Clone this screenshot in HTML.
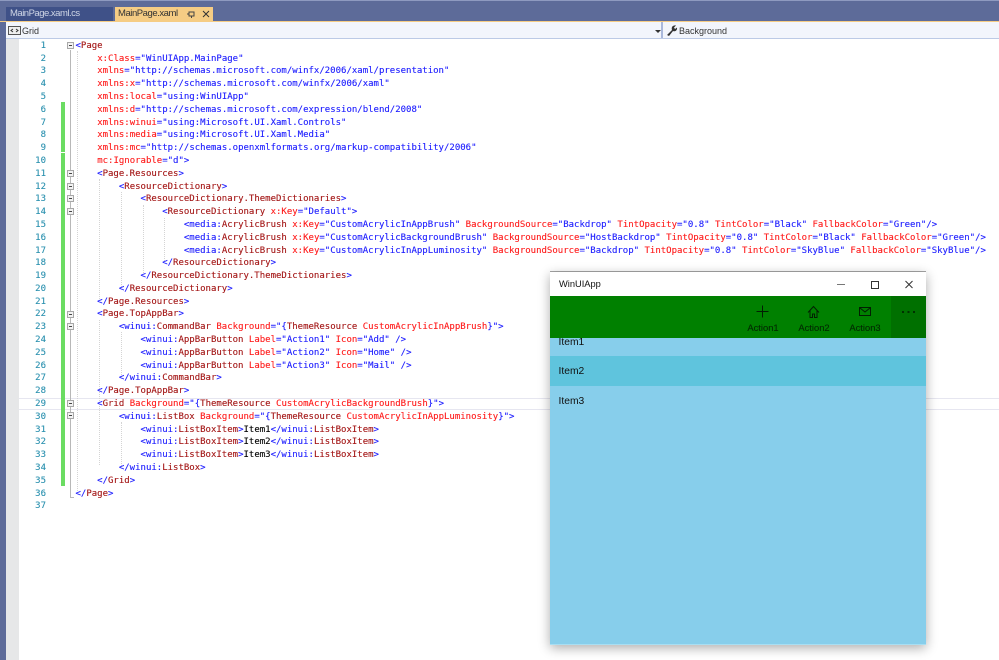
<!DOCTYPE html>
<html><head><meta charset="utf-8"><style>
html,body{margin:0;padding:0;width:999px;height:660px;overflow:hidden;background:#fff}
body{position:relative;font-family:"Liberation Sans",sans-serif}
.a{position:absolute}
.code,.n{position:absolute;left:0;top:1px;width:999px}
.code div{position:absolute;left:75.5px;white-space:pre;font:9px/13px "DejaVu Sans Mono","Liberation Mono",monospace;color:#1c1cff;-webkit-text-stroke:.12px currentColor}
.code i{font-style:normal;color:#a31515}
.code b{font-weight:normal;color:#ff1a1a}
.code u{text-decoration:none;color:#000}
.n div{position:absolute;left:20px;width:26px;text-align:right;font:9px/13px "DejaVu Sans Mono",monospace;color:#2b91af;-webkit-text-stroke:.12px currentColor}
.f{position:absolute;left:67px;width:7px;height:7px;background:#f3f3f3;border:1px solid #a8a8a8;box-sizing:border-box}
.f:after{content:"";position:absolute;left:1px;top:2px;width:3px;height:1px;background:#444}
.g{position:absolute;width:0;border-left:1px dotted #d4d4d4}
.w{font-size:9.400px;color:#012a01;position:absolute;top:322px;width:60px;text-align:center;line-height:12px;-webkit-text-stroke:.1px currentColor}
.it{position:absolute;left:8.500px;font-size:10.300px;line-height:13px;color:#111}
</style></head><body>
<div class="a" style="left:0;top:0;width:999px;height:22px;background:#5d6b99"></div>
<div class="a" style="left:0;top:0;width:999px;height:1px;background:#8e9ac0"></div>
<div class="a" style="left:6px;top:7px;width:107px;height:14px;background:#3f5188;color:#cfd6e6;font-size:9.500px;letter-spacing:-.5px;line-height:14px;text-indent:4px">MainPage.xaml.cs</div>
<div class="a" style="left:115px;top:7px;width:98px;height:15px;background:#f5cc84;color:#333;font-size:9.500px;letter-spacing:-.45px;line-height:14px;text-indent:3px">MainPage.xaml</div>
<svg class="a" style="left:185px;top:9px" width="28" height="11"><path d="M4 3h5v4H4zM2 5h2M6.500 7v2" stroke="#444" fill="none"/><path d="M18 2l6 6M24 2l-6 6" stroke="#333" fill="none"/></svg>
<div class="a" style="left:0;top:21px;width:999px;height:1px;background:#f5cc84"></div>
<div class="a" style="left:6px;top:22px;width:993px;height:16px;background:#f2f5fc;border-bottom:1px solid #bccae6"></div>
<svg class="a" style="left:8px;top:26px" width="14" height="10"><rect x=".5" y=".5" width="12" height="8" fill="#eee" stroke="#555"/><path d="M5 3L3 4.500L5 6M8 3l2 1.500L8 6" stroke="#333" fill="none"/></svg>
<div class="a" style="left:22px;top:24px;font-size:9px;line-height:14px;color:#333">Grid</div>
<div class="a" style="left:655px;top:30px;width:0;height:0;border:3px solid transparent;border-top:3px solid #333"></div>
<div class="a" style="left:661px;top:22px;width:2px;height:16px;background:#a9b8dc"></div>
<svg class="a" style="left:666px;top:24px" width="13" height="13"><path d="M1 11l5-5c-1-3 1-5 4-4.500L8 3.500l1 1.500 2-1.500c.5 3-2 4.500-4 3.500l-4 5z" fill="#333"/></svg>
<div class="a" style="left:679px;top:24px;font-size:9px;line-height:14px;color:#333">Background</div>

<div class="a" style="left:0;top:22px;width:6px;height:638px;background:#5d6b99"></div>
<div class="a" style="left:6px;top:39px;width:13px;height:621px;background:#e6e7e8"></div>
<div class="a" style="left:19px;top:398px;width:980px;height:1px;background:#e6e6f0"></div>
<div class="a" style="left:19px;top:409px;width:980px;height:1px;background:#e6e6f0"></div>
<div class="a" style="left:61px;top:102px;width:4px;height:50px;background:#6bdc62"></div>
<div class="a" style="left:61px;top:153px;width:4px;height:333px;background:#6bdc62"></div>
<div class="a" style="left:70px;top:50px;width:1px;height:448px;background:#b8b8b8"></div>
<div class="a" style="left:70px;top:497px;width:4px;height:1px;background:#b8b8b8"></div>
<div class="g" style="left:77px;top:51px;height:440px"></div>
<div class="g" style="left:99px;top:179px;height:120px"></div>
<div class="g" style="left:99px;top:320px;height:145px"></div>
<div class="g" style="left:121px;top:192px;height:95px"></div>
<div class="g" style="left:121px;top:332px;height:45px"></div>
<div class="g" style="left:121px;top:422px;height:44px"></div>
<div class="g" style="left:143px;top:205px;height:68px"></div>
<div class="g" style="left:164px;top:218px;height:43px"></div>
<div class="f" style="top:42px"></div><div class="f" style="top:170px"></div><div class="f" style="top:183px"></div><div class="f" style="top:195px"></div><div class="f" style="top:208px"></div><div class="f" style="top:311px"></div><div class="f" style="top:323px"></div><div class="f" style="top:400px"></div><div class="f" style="top:412px"></div>

<div class="n">
<div style="top:39px">1</div><div style="top:52px">2</div><div style="top:64px">3</div><div style="top:77px">4</div><div style="top:90px">5</div><div style="top:103px">6</div><div style="top:116px">7</div><div style="top:128px">8</div><div style="top:141px">9</div><div style="top:154px">10</div><div style="top:167px">11</div><div style="top:180px">12</div><div style="top:192px">13</div><div style="top:205px">14</div><div style="top:218px">15</div><div style="top:231px">16</div><div style="top:244px">17</div><div style="top:256px">18</div><div style="top:269px">19</div><div style="top:282px">20</div><div style="top:295px">21</div><div style="top:307px">22</div><div style="top:320px">23</div><div style="top:333px">24</div><div style="top:346px">25</div><div style="top:359px">26</div><div style="top:371px">27</div><div style="top:384px">28</div><div style="top:397px">29</div><div style="top:410px">30</div><div style="top:423px">31</div><div style="top:435px">32</div><div style="top:448px">33</div><div style="top:461px">34</div><div style="top:474px">35</div><div style="top:487px">36</div><div style="top:499px">37</div>
</div>

<div class="code">
<div style="top:39px">&lt;<i>Page</i></div>
<div style="top:52px">    <b>x:Class</b>="WinUIApp.MainPage"</div>
<div style="top:64px">    <b>xmlns</b>="http://schemas.microsoft.com/winfx/2006/xaml/presentation"</div>
<div style="top:77px">    <b>xmlns:x</b>="http://schemas.microsoft.com/winfx/2006/xaml"</div>
<div style="top:90px">    <b>xmlns:local</b>="using:WinUIApp"</div>
<div style="top:103px">    <b>xmlns:d</b>="http://schemas.microsoft.com/expression/blend/2008"</div>
<div style="top:116px">    <b>xmlns:winui</b>="using:Microsoft.UI.Xaml.Controls"</div>
<div style="top:128px">    <b>xmlns:media</b>="using:Microsoft.UI.Xaml.Media"</div>
<div style="top:141px">    <b>xmlns:mc</b>="http://schemas.openxmlformats.org/markup-compatibility/2006"</div>
<div style="top:154px">    <b>mc:Ignorable</b>="d"&gt;</div>
<div style="top:167px">    &lt;<i>Page.Resources</i>&gt;</div>
<div style="top:180px">        &lt;<i>ResourceDictionary</i>&gt;</div>
<div style="top:192px">            &lt;<i>ResourceDictionary.ThemeDictionaries</i>&gt;</div>
<div style="top:205px">                &lt;<i>ResourceDictionary</i> <b>x:Key</b>="Default"&gt;</div>
<div style="top:218px">                    &lt;media:<i>AcrylicBrush</i> <b>x:Key</b>="CustomAcrylicInAppBrush" <b>BackgroundSource</b>="Backdrop" <b>TintOpacity</b>="0.8" <b>TintColor</b>="Black" <b>FallbackColor</b>="Green"/&gt;</div>
<div style="top:231px">                    &lt;media:<i>AcrylicBrush</i> <b>x:Key</b>="CustomAcrylicBackgroundBrush" <b>BackgroundSource</b>="HostBackdrop" <b>TintOpacity</b>="0.8" <b>TintColor</b>="Black" <b>FallbackColor</b>="Green"/&gt;</div>
<div style="top:244px">                    &lt;media:<i>AcrylicBrush</i> <b>x:Key</b>="CustomAcrylicInAppLuminosity" <b>BackgroundSource</b>="Backdrop" <b>TintOpacity</b>="0.8" <b>TintColor</b>="SkyBlue" <b>FallbackColor</b>="SkyBlue"/&gt;</div>
<div style="top:256px">                &lt;/<i>ResourceDictionary</i>&gt;</div>
<div style="top:269px">            &lt;/<i>ResourceDictionary.ThemeDictionaries</i>&gt;</div>
<div style="top:282px">        &lt;/<i>ResourceDictionary</i>&gt;</div>
<div style="top:295px">    &lt;/<i>Page.Resources</i>&gt;</div>
<div style="top:307px">    &lt;<i>Page.TopAppBar</i>&gt;</div>
<div style="top:320px">        &lt;winui:<i>CommandBar</i> <b>Background</b>="{<i>ThemeResource</i> <b>CustomAcrylicInAppBrush</b>}"&gt;</div>
<div style="top:333px">            &lt;winui:<i>AppBarButton</i> <b>Label</b>="Action1" <b>Icon</b>="Add" /&gt;</div>
<div style="top:346px">            &lt;winui:<i>AppBarButton</i> <b>Label</b>="Action2" <b>Icon</b>="Home" /&gt;</div>
<div style="top:359px">            &lt;winui:<i>AppBarButton</i> <b>Label</b>="Action3" <b>Icon</b>="Mail" /&gt;</div>
<div style="top:371px">        &lt;/winui:<i>CommandBar</i>&gt;</div>
<div style="top:384px">    &lt;/<i>Page.TopAppBar</i>&gt;</div>
<div style="top:397px">    &lt;<i>Grid</i> <b>Background</b>="{<i>ThemeResource</i> <b>CustomAcrylicBackgroundBrush</b>}"&gt;</div>
<div style="top:410px">        &lt;winui:<i>ListBox</i> <b>Background</b>="{<i>ThemeResource</i> <b>CustomAcrylicInAppLuminosity</b>}"&gt;</div>
<div style="top:423px">            &lt;winui:<i>ListBoxItem</i>&gt;<u>Item1</u>&lt;/winui:<i>ListBoxItem</i>&gt;</div>
<div style="top:435px">            &lt;winui:<i>ListBoxItem</i>&gt;<u>Item2</u>&lt;/winui:<i>ListBoxItem</i>&gt;</div>
<div style="top:448px">            &lt;winui:<i>ListBoxItem</i>&gt;<u>Item3</u>&lt;/winui:<i>ListBoxItem</i>&gt;</div>
<div style="top:461px">        &lt;/winui:<i>ListBox</i>&gt;</div>
<div style="top:474px">    &lt;/<i>Grid</i>&gt;</div>
<div style="top:487px">&lt;/<i>Page</i>&gt;</div>
</div>

<div class="a" style="left:550px;top:272px;width:376px;height:373px;background:#87ceeb;box-shadow:0 3px 11px rgba(0,0,0,.33),0 -1px 0 #a6a6a6;overflow:hidden">
  <div class="a" style="left:0;top:0;width:376px;height:24px;background:#fff"></div>
  <div class="a" style="left:9px;top:6px;font-size:9.300px;line-height:13px;color:#111">WinUIApp</div>
  <svg class="a" style="left:280px;top:4px" width="96" height="16" fill="none" stroke="#333"><path d="M7 8.500h8" stroke="#777"/><rect x="41.500" y="5.500" width="7" height="7"/><path d="M75.500 5l7 7M82.500 5l-7 7"/></svg>
  <div class="a" style="left:0;top:24px;width:376px;height:42px;background:#008000"></div>
  <div class="a" style="left:341px;top:24px;width:35px;height:42px;background:#007000"></div>
  <div class="a" style="left:0;top:84px;width:376px;height:30px;background:#5fc4dd"></div>
  <div class="it" style="top:64px">Item1</div>
  <div class="it" style="top:93px">Item2</div>
  <div class="it" style="top:123px">Item3</div>
  <div class="a" style="left:0;bottom:0;width:376px;height:1px;background:#a8def2"></div>
  <div class="a" style="left:0;top:24px;width:376px;height:42px;pointer-events:none;background:transparent"></div>
</div>
<svg class="a" style="left:750px;top:300px" width="170" height="22" fill="none" stroke="#031f03">
  <path d="M12.500 5.500v12M6.500 11.500h12" stroke-width="1"/>
  <path d="M58 12.500l5.500-6 5.500 6M60 10.500v7h2.500v-3.500h2v3.500h2.500v-7" />
  <rect x="109.500" y="7.500" width="11" height="8"/><path d="M110 8l5 4 5-4"/>
  <path d="M152 12h2M157.500 12h2M163 12h2" stroke="#001a00" stroke-width="1.400"/>
</svg>
<div class="w" style="left:733px">Action1</div>
<div class="w" style="left:784px">Action2</div>
<div class="w" style="left:835px">Action3</div>
</body></html>
